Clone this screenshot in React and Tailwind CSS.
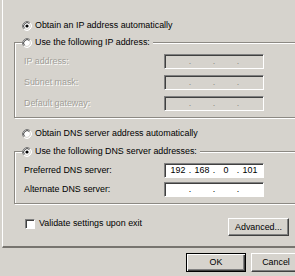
import React from 'react';

function Radio({ checked }) {
    return (
        <svg width="10" height="10" viewBox="0 0 10 10" className="shrink-0">
            <circle cx="5" cy="5" r="4" fill="#fff" />
            <path d="M1.82 8.18 A4.5 4.5 0 0 1 8.18 1.82" stroke="#808080" fill="none" />
            <path d="M2.53 7.47 A3.5 3.5 0 0 1 7.47 2.53" stroke="#404040" fill="none" />
            <path d="M8.18 1.82 A4.5 4.5 0 0 1 1.82 8.18" stroke="#ffffff" fill="none" />
            <path d="M7.47 2.53 A3.5 3.5 0 0 1 2.53 7.47" stroke="#d6d3cd" fill="none" />
            {checked && <circle cx="5" cy="5" r="1.6" fill="#000" />}
        </svg>
    );
}

function IpBox({ enabled, values = ['', '', '', ''] }) {
    const dot = enabled ? 'text-black' : 'text-[#8f8c86]';
    return (
        <div
            className={`flex h-[15px] w-[100px] shrink-0 items-center border border-t-[#808080] border-l-[#808080] border-b-white border-r-white pl-[3px] shadow-[inset_1px_1px_0_#404040] ${
                enabled ? 'bg-white' : 'bg-[#d6d3cd]'
            }`}
        >
            <span className="w-[20px] text-center">{values[0]}</span>
            <span className={`w-[4px] text-center ${dot}`}>.</span>
            <span className="w-[20px] text-center">{values[1]}</span>
            <span className={`w-[4px] text-center ${dot}`}>.</span>
            <span className="w-[20px] text-center">{values[2]}</span>
            <span className={`w-[4px] text-center ${dot}`}>.</span>
            <span className="w-[20px] text-center">{values[3]}</span>
        </div>
    );
}

function Row({ label, disabled, first, gap, children }) {
    return (
        <div className={`flex h-[15px] items-center pl-[9px] ${first ? 'mt-[6px]' : gap}`}>
            <span
                className={`w-[140px] shrink-0 ${
                    disabled ? 'text-[#a19e98] [text-shadow:1px_1px_0_#fff]' : 'text-black'
                }`}
            >
                {label}
            </span>
            {children}
        </div>
    );
}

function Button({ children, isDefault, className = '' }) {
    return (
        <div
            className={`flex shrink-0 items-center justify-center ${
                isDefault
                    ? 'border border-black shadow-[inset_1px_1px_0_#fff,inset_-1px_-1px_0_#404040,inset_-2px_-2px_0_#808080]'
                    : 'border border-t-white border-l-white border-r-[#404040] border-b-[#404040] shadow-[inset_-1px_-1px_0_#808080]'
            } ${className}`}
        >
            {children}
        </div>
    );
}

export default function App() {
    return (
        <div className="h-[276px] w-[295px] overflow-hidden bg-[#d6d3cd] font-['Liberation_Sans',Arial,sans-serif] text-[8.9px] leading-[11px] text-black">
            <div className="-mt-[10px] ml-[2px] h-[258px] w-[320px] border-b-2 border-l border-b-[#77746f] border-l-white">
                <div className="whitespace-nowrap pl-[9px]">the appropriate IP settings.</div>

                <div className="mt-[19px] flex h-[11px] items-center gap-[3px] pl-[19px]">
                    <Radio checked />
                    <span>Obtain an IP address automatically</span>
                </div>

                {/* IP group */}
                <div className="ml-[11px] mt-[11px] h-[76px] w-[300px] border border-[#8c8983] shadow-[inset_1px_1px_0_#fff,1px_1px_0_#fff]">
                    <div className="-mt-[6px] ml-[7px] flex h-[11px] w-fit items-center gap-[3px] bg-[#d6d3cd] pr-[3px]">
                        <Radio />
                        <span>Use the following IP address:</span>
                    </div>
                    <Row label="IP address:" disabled first>
                        <IpBox />
                    </Row>
                    <Row label="Subnet mask:" disabled gap="mt-[6px]">
                        <IpBox />
                    </Row>
                    <Row label="Default gateway:" disabled gap="mt-[6px]">
                        <IpBox />
                    </Row>
                </div>

                <div className="mt-[10px] flex h-[11px] items-center gap-[3px] pl-[19px]">
                    <Radio />
                    <span>Obtain DNS server address automatically</span>
                </div>

                {/* DNS group */}
                <div className="ml-[11px] mt-[12px] h-[53px] w-[300px] border border-[#8c8983] shadow-[inset_1px_1px_0_#fff,1px_1px_0_#fff]">
                    <div className="-mt-[6px] ml-[7px] flex h-[11px] w-fit items-center gap-[3px] bg-[#d6d3cd] pr-[3px]">
                        <Radio checked />
                        <span>Use the following DNS server addresses:</span>
                    </div>
                    <Row label="Preferred DNS server:" first>
                        <IpBox enabled values={['192', '168', '0', '101']} />
                    </Row>
                    <Row label="Alternate DNS server:" gap="mt-[4px]">
                        <IpBox enabled />
                    </Row>
                </div>

                <div className="mt-[14px] flex items-start">
                    <div className="flex w-[225px] shrink-0 items-center gap-[4px] pl-[22px]">
                        <div className="h-[10px] w-[10px] border border-t-[#808080] border-l-[#808080] border-b-white border-r-white bg-white shadow-[inset_1px_1px_0_#404040]" />
                        <span>Validate settings upon exit</span>
                    </div>
                    <Button className="h-[18px] w-[61px]">Advanced...</Button>
                </div>
            </div>

            <div className="mt-[5px] flex w-[330px] gap-[5px] pl-[186px]">
                <Button isDefault className="h-[19px] w-[60px]">
                    OK
                </Button>
                <Button className="h-[19px] w-[50px]">Cancel</Button>
            </div>
        </div>
    );
}
